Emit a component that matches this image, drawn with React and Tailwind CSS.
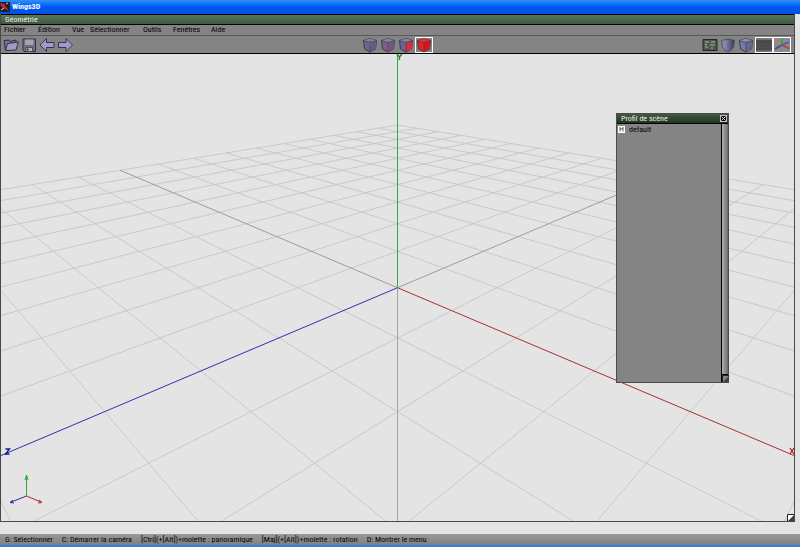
import React from "react";

const FONT = "font-['Liberation_Sans_Narrow','Roboto_Condensed','Liberation_Sans',sans-serif]";

const VIEW_W = 793;
const VIEW_H = 467;

// Perspective projection of a ground-plane point into view coordinates.
function project(x, z) {
  const w = 6.27 - (x + z) / 2;
  return [396.5 + (312.7 * (x - z)) / w, -31 + 1659.7 / w];
}

const UNITS = Array.from({ length: 21 }, (_, i) => i - 10);

function GridLine({ from, to, color }) {
  const [x1, y1] = project(from[0], from[1]);
  const [x2, y2] = project(to[0], to[1]);
  return <line x1={x1} y1={y1} x2={x2} y2={y2} stroke={color} />;
}

function Scene() {
  return (
    <svg
      viewBox={`0 0 ${VIEW_W} ${VIEW_H}`}
      preserveAspectRatio="xMidYMid slice"
      className="block h-full w-full"
      role="img"
      aria-label="Scène"
    >
      <g strokeWidth="1">
        {UNITS.filter((k) => k !== 0).map((k) => {
          const end = Math.min(10, 11 - k);
          return (
            <g key={k}>
              <GridLine from={[k, -10]} to={[k, end]} color="#c9c9c9" />
              <GridLine from={[-10, k]} to={[end, k]} color="#c9c9c9" />
            </g>
          );
        })}
        <GridLine from={[-10, 0]} to={[0, 0]} color="#9c9c9c" />
        <GridLine from={[0, -10]} to={[0, 0]} color="#9c9c9c" />
        <GridLine from={[0, 0]} to={[10, 0]} color="#a83030" />
        <GridLine from={[0, 0]} to={[0, 10]} color="#3030b0" />
        <path d="M396.5 234V467" stroke="#a4a4a4" shapeRendering="crispEdges" />
        <path d="M396.5 0V234" stroke="#38a648" shapeRendering="crispEdges" />
      </g>
      <path d="M396 0l2.500 3L401 0M398.500 3v3" fill="none" stroke="#0c8c1c" strokeWidth="1.300" />
      <path d="M4.500 395h4l-4 5h4" fill="none" stroke="#14148c" strokeWidth="1.300" />
      <path d="M789 394l4 6M793 394l-4 6" stroke="#b01020" strokeWidth="1.200" />
      <g fill="none">
        <path d="M25.500 442V421M24 426l1.500-5 1.500 5" stroke="#30a838" />
        <path d="M25.500 442L9 448.500l4 0.500M9 448.500l3-2.500" stroke="#2c2c98" />
        <path d="M25.500 442L41 448.500l-4 0.500M41 448.500l-3-2.500" stroke="#b02c2c" />
      </g>
    </svg>
  );
}

function Cube({ top, left, right, edge, edgeColor = "#d82850" }) {
  return (
    <svg viewBox="0 0 16 16" className="h-4 w-4" aria-hidden="true">
      <path d="M1.500 3.500L8 1.500l6.500 2L13.500 12 8 15 2.500 12z" fill={left} stroke="#3c3c50" strokeLinejoin="round" />
      <path d="M1.500 3.500L8 1.500l6.500 2L8 5.500z" fill={top} />
      <path d="M8 5.500l6.500-2-1 8.500L8 15z" fill={right} />
      <path d="M1.500 3.500L8 5.500l6.500-2M8 5.500V15" fill="none" stroke="#3c3c50" strokeWidth="0.700" />
      {edge && <path d={edge} fill="none" stroke={edgeColor} strokeWidth="1.400" />}
    </svg>
  );
}

function Tool({ label, children, active }) {
  return (
    <button
      type="button"
      aria-label={label}
      aria-pressed={active ? true : undefined}
      className={
        active
          ? "flex h-4 w-[18px] items-center justify-center border border-white"
          : "flex h-4 w-[18px] items-center justify-center"
      }
    >
      {children}
    </button>
  );
}

function Arrow({ d }) {
  return (
    <svg viewBox="0 0 16 16" className="h-4 w-4" aria-hidden="true">
      <path d={d} fill="#9c9ccc" stroke="#34344c" strokeLinejoin="round" />
    </svg>
  );
}

function Toolbar() {
  return (
    <div className="grid h-[18px] grid-cols-3 items-center border-b border-black bg-[#848484]">
      <div className="flex pl-px">
        <Tool label="Ouvrir">
          <svg viewBox="0 0 16 16" className="h-4 w-4" aria-hidden="true">
            <path d="M2.500 13.500L1 3.500l5-0.500 1 1.500 6-1.500V6" fill="#74749a" stroke="#303040" strokeLinejoin="round" />
            <path d="M2.500 13.500L4.500 6.500l11-1.500-2.500 8z" fill="#9c9cc4" stroke="#303040" strokeLinejoin="round" />
          </svg>
        </Tool>
        <Tool label="Enregistrer">
          <svg viewBox="0 0 16 16" className="h-4 w-4" aria-hidden="true">
            <path d="M2 2h12.500v12.500H3L2 13.500z" fill="#6c6c84" stroke="#303038" />
            <path d="M4 2.500h8.500V8H4z" fill="#a4a4b0" />
            <path d="M5 10.500h6.500v4H5z" fill="#b4b4c0" stroke="#383844" strokeWidth="0.700" />
            <path d="M6 11.500h1.500v2H6z" fill="#303038" />
          </svg>
        </Tool>
        <Tool label="Annuler">
          <Arrow d="M1 8l6.500-6.500v4H15v5H7.500v4z" />
        </Tool>
        <Tool label="Rétablir">
          <Arrow d="M15.500 8L9 1.500v4H1.500v5H9v4z" />
        </Tool>
      </div>
      <div className="flex justify-center pr-px">
        <Tool label="Sommets">
          <Cube top="#8484a4" left="#68688c" right="#606084" edge="M8 3v6" edgeColor="#905080" />
        </Tool>
        <Tool label="Arêtes">
          <Cube top="#8484a4" left="#68688c" right="#606084" edge="M8 5.500v9" />
        </Tool>
        <Tool label="Faces">
          <Cube top="#8484a4" left="#68688c" right="#e02c34" />
        </Tool>
        <Tool label="Objets" active>
          <Cube top="#f03030" left="#e82020" right="#d81818" />
        </Tool>
      </div>
      <div className="flex justify-end pr-[3px]">
        <Tool label="Préférences">
          <svg viewBox="0 0 16 16" className="h-4 w-4" aria-hidden="true">
            <path d="M1 2.500h14v11H1z" fill="#4c584c" stroke="#202820" />
            <path d="M3 5h4M3 7.500h2M3 10h3M9 5h4M8 8h5M9 11h2" stroke="#a8b4a8" />
          </svg>
        </Tool>
        <Tool label="Lissage">
          <svg viewBox="0 0 16 16" className="h-4 w-4" aria-hidden="true">
            <defs>
              <linearGradient id="smooth">
                <stop offset="0.200" stopColor="#8c8cb4" />
                <stop offset="1" stopColor="#3c3c58" />
              </linearGradient>
            </defs>
            <path d="M1.500 3.500Q8 0.500 14.500 3.500L13.500 10Q12 13.500 8 15 4 13.500 2.500 10z" fill="url(#smooth)" stroke="#3c3c50" strokeWidth="0.700" />
          </svg>
        </Tool>
        <Tool label="Perspective">
          <Cube top="#8c8cb0" left="#7878a4" right="#68688c" />
        </Tool>
        <Tool label="Plan de sol" active>
          <svg viewBox="0 0 16 14" className="h-[14px] w-4" aria-hidden="true">
            <path d="M0 0h16v14H0z" fill="#505050" />
            <path d="M0 3h16M0 5h16M0 7.500h16M0 11h16" stroke="#424242" strokeWidth="0.600" />
            <path d="M0 0h16v2H0zM0 12.500h16V14H0z" fill="#747474" />
          </svg>
        </Tool>
        <Tool label="Axes" active>
          <svg viewBox="0 0 16 14" className="h-[14px] w-4" aria-hidden="true">
            <path d="M0 0h16v14H0z" fill="#8a8a8a" />
            <path d="M8 7l7-3" stroke="#4858b8" strokeWidth="1.400" />
            <path d="M8 7L1 4" stroke="#d08040" strokeWidth="1.400" />
            <path d="M8 7l7 3.500" stroke="#c83838" strokeWidth="1.600" />
            <path d="M8 7L1 11" stroke="#3848c0" strokeWidth="1.600" />
            <path d="M8 7V0.500" stroke="#28a840" strokeWidth="1.600" />
          </svg>
        </Tool>
      </div>
    </div>
  );
}

function ResizeCorner() {
  return (
    <svg viewBox="0 0 7 7" className="block h-[7px] w-[7px]" aria-hidden="true">
      <path d="M0.500 7V0.500H7" fill="none" stroke="#202020" />
      <path d="M7 1v6H1z" fill="#404040" />
    </svg>
  );
}

function ProfilePanel() {
  return (
    <section className="absolute top-[59px] right-[65px] flex h-[270px] w-[113px] flex-col border border-[#4c4c4c] bg-[#848484]">
      <header className="flex h-[10px] items-center justify-between border-b border-black bg-linear-to-b from-[#405c40] to-[#203420] pr-px pl-1 text-[#f0f0f0]">
        <h2>Profil de scène</h2>
        <button type="button" aria-label="Fermer" className="flex h-[7px] w-[7px] items-center justify-center border border-[#c0c0c0] bg-black">
          <svg viewBox="0 0 5 5" className="h-[5px] w-[5px]" aria-hidden="true">
            <path d="M0.500 0.500l4 4M4.500 0.500l-4 4" stroke="#e0e0e0" />
          </svg>
        </button>
      </header>
      <div className="flex flex-1">
        <div className="flex-1">
          <div className="flex h-[11px] items-center gap-1 pl-px text-black">
            <span className="flex h-[7px] w-[7px] items-center justify-center bg-white">
              <svg viewBox="0 0 7 7" className="h-[7px] w-[7px]" aria-hidden="true">
                <path d="M2 5.500v-4l1.500 2L5 1.500v4" fill="none" stroke="#303030" strokeWidth="0.800" />
              </svg>
            </span>
            <span>default</span>
          </div>
        </div>
        <div className="flex w-[7px] flex-col border-l border-black">
          <div className="flex-1 bg-linear-to-r from-[#b0b0b0] to-[#6c6c6c]" />
          <div className="border-t border-black bg-[#848484]">
            <ResizeCorner />
          </div>
        </div>
      </div>
    </section>
  );
}

const MENUS = [
  { name: "Fichier", width: "w-[34px]" },
  { name: "Édition", width: "w-[34px]" },
  { name: "Vue", width: "w-[18px]" },
  { name: "Sélectionner", width: "w-[53px]" },
  { name: "Outils", width: "w-[30px]" },
  { name: "Fenêtres", width: "w-[38px]" },
  { name: "Aide", width: "w-[20px]" },
];

export default function App() {
  return (
    <div className={`flex min-h-screen flex-col bg-[#e4e4e4] text-[8px] leading-[10px] text-black ${FONT}`}>
      <header className="flex h-[14px] items-center gap-[2px] bg-linear-to-b from-[#2f90f8] via-[#0058f0] to-[#0050e8] text-white">
        <svg viewBox="0 0 10 10" className="h-[10px] w-[10px]" aria-hidden="true">
          <path d="M0 0h10v10H0z" fill="#202028" />
          <path d="M0 1l4 1 2 3 3 4-4-2-4-3z" fill="#c82838" />
          <path d="M1 8l3-2M6 2l2-1" stroke="#d8d8e0" />
        </svg>
        <h1 className="font-bold">Wings3D</h1>
      </header>
      <main className="mr-[5px] flex flex-1 flex-col border-r border-l border-[#484848]">
        <div className="h-[11px] border-t border-b border-black bg-linear-to-b from-[#58785a] to-[#3c583e] pl-1 leading-[9px] text-[#f0f0f0]">
          Géométrie
        </div>
        <nav className="flex h-[11px] items-center border-b border-[#585858] bg-[#848484] pl-[3px]">
          {MENUS.map(({ name, width }) => (
            <button type="button" key={name} className={`${width} text-left`}>
              {name}
            </button>
          ))}
        </nav>
        <Toolbar />
        <div className="relative flex-1">
          <div className="absolute inset-0">
            <Scene />
          </div>
          <ProfilePanel />
          <div className="absolute right-0 bottom-0 bg-white">
            <ResizeCorner />
          </div>
        </div>
      </main>
      <div className="h-[13px]">
        <div className="mr-[5px] h-px bg-[#484848]" />
      </div>
      <footer className="flex h-[11px] items-center gap-[9px] bg-linear-to-b from-[#989898] to-[#808080] pl-[5px]">
        <span>G: Sélectionner</span>
        <span>C: Démarrer la caméra</span>
        <span>[Ctrl](+[Alt])+molette : panoramique</span>
        <span>[Maj](+[Alt])+molette : rotation</span>
        <span>D: Montrer le menu</span>
      </footer>
      <div className="h-[2px] bg-[#3080e8]" />
    </div>
  );
}
